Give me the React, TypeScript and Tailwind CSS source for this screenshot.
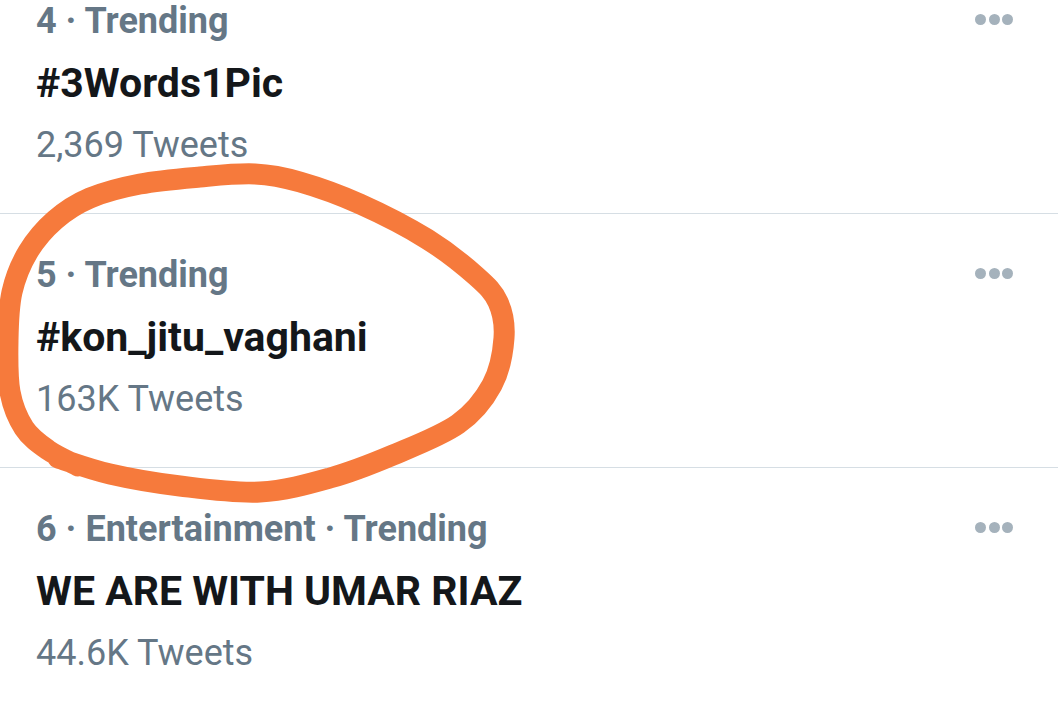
import { Fragment } from 'react'

type Trend = {
  meta: string
  title: string
  count: string
}

const TRENDS: Trend[] = [
  { meta: '4 · Trending', title: '#3Words1Pic', count: '2,369 Tweets' },
  { meta: '5 · Trending', title: '#kon_jitu_vaghani', count: '163K Tweets' },
  { meta: '6 · Entertainment · Trending', title: 'WE ARE WITH UMAR RIAZ', count: '44.6K Tweets' },
]

// centre line of the hand drawn loop, traced from the screenshot
const LOOP: [number, number][] = [
  [58, 458], [110, 474], [180, 486], [260, 492], [330, 478], [393, 455],
  [458, 424], [492, 385], [504, 338], [498, 302], [476, 276], [427, 239],
  [360, 204], [300, 182], [255, 174], [200, 177], [140, 184], [90, 198],
  [55, 220], [28, 252], [12, 292], [8, 340], [10, 392], [24, 428],
  [48, 450], [78, 466],
]

function smoothPath(pts: [number, number][]) {
  let d = `M ${pts[0][0]} ${pts[0][1]}`
  for (let i = 0; i < pts.length - 1; i++) {
    const p0 = pts[i - 1] ?? pts[i]
    const p1 = pts[i]
    const p2 = pts[i + 1]
    const p3 = pts[i + 2] ?? p2
    const c1x = p1[0] + (p2[0] - p0[0]) / 6
    const c1y = p1[1] + (p2[1] - p0[1]) / 6
    const c2x = p2[0] - (p3[0] - p1[0]) / 6
    const c2y = p2[1] - (p3[1] - p1[1]) / 6
    d += ` C ${c1x.toFixed(1)} ${c1y.toFixed(1)} ${c2x.toFixed(1)} ${c2y.toFixed(1)} ${p2[0]} ${p2[1]}`
  }
  return d
}

function MoreDots() {
  return (
    <div className="flex gap-[2.5px] pt-[23px]">
      <span className="h-[11px] w-[11px] rounded-full bg-[#a5b2bc]" />
      <span className="h-[11px] w-[11px] rounded-full bg-[#a5b2bc]" />
      <span className="h-[11px] w-[11px] rounded-full bg-[#a5b2bc]" />
    </div>
  )
}

function TrendRow({ trend, first }: { trend: Trend; first: boolean }) {
  return (
    <div
      className={
        'flex items-start justify-between border-b border-[#d6dee4] pl-[36px] pr-[45px] pt-[31px] pb-[37px] ' +
        (first ? 'mt-[-40px]' : '')
      }
    >
      <div className="flex flex-col">
        <div className="text-[36px] font-bold leading-[61px] text-[#657786]">{trend.meta}</div>
        <div className="mt-[1px] text-[41px] font-bold leading-[61px] text-[#14171a]">
          {trend.title}
        </div>
        <div className="mt-[1px] text-[36px] leading-[61px] text-[#657786]">{trend.count}</div>
      </div>
      <MoreDots />
    </div>
  )
}

export default function App() {
  return (
    <div
      className="relative h-[704px] w-[1058px] overflow-hidden bg-white"
      style={{ fontFamily: 'Roboto, "Liberation Sans", sans-serif' }}
    >
      {TRENDS.map((t, i) => (
        <Fragment key={t.title}>
          <TrendRow trend={t} first={i === 0} />
        </Fragment>
      ))}

      <svg
        className="pointer-events-none absolute left-0 top-0"
        width={1058}
        height={704}
        viewBox="0 0 1058 704"
      >
        <path
          d={smoothPath(LOOP)}
          fill="none"
          stroke="#f67a3c"
          strokeWidth={21}
          strokeLinecap="round"
          strokeLinejoin="round"
        />
      </svg>
    </div>
  )
}
